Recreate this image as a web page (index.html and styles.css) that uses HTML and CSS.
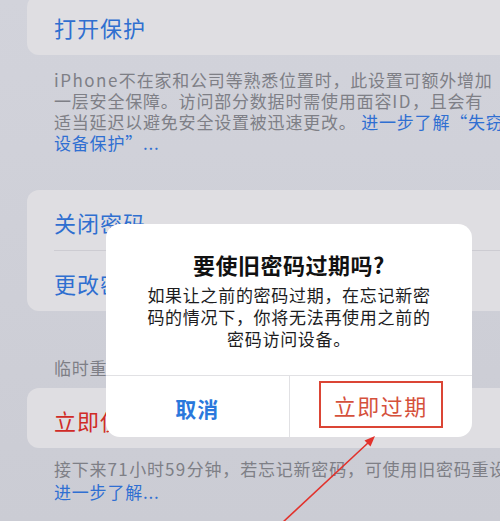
FILE: index.html
```html
<!DOCTYPE html>
<html lang="zh">
<head>
<meta charset="utf-8">
<link rel="stylesheet" href="styles.css">
</head>
<body>
<div class="page">
  <div class="card card-top">
    <div class="row blue">打开保护</div>
  </div>
  <div class="note">
    <div class="line"><span class="latin">iPhone</span>不在家和公司等熟悉位置时，此设置可额外增加</div>
    <div class="line">一层安全保障。访问部分数据时需使用面容<span class="latin">ID</span>，且会有</div>
    <div class="line">适当延迟以避免安全设置被迅速更改。 <span class="link">进一步了解“失窃</span></div>
    <div class="line link">设备保护”...</div>
  </div>
  <div class="card card-mid">
    <div class="row blue">关闭密码</div>
    <div class="sep"></div>
    <div class="row blue">更改密码</div>
  </div>
  <div class="header">临时重设密码</div>
  <div class="card">
    <div class="row red">立即使旧密码过期</div>
  </div>
  <div class="note note-bottom">
    <div class="line">接下来<span class="latin">71</span>小时<span class="latin">59</span>分钟，若忘记新密码，可使用旧密码重设密码。</div>
    <div class="line link">进一步了解...</div>
  </div>
</div>

<div class="alert">
  <div class="alert-body">
    <div class="alert-title">要使旧密码过期吗?</div>
    <div class="alert-msg">如果让之前的密码过期，在忘记新密<br>码的情况下，你将无法再使用之前的<br>密码访问设备。</div>
  </div>
  <div class="alert-actions">
    <div class="action cancel">取消</div>
    <div class="action">
      <span class="destructive">立即过期</span>
    </div>
  </div>
</div>

<svg class="arrow" width="500" height="521" viewBox="0 0 500 521">
  <line x1="282" y1="523" x2="369" y2="442" stroke="#e2322c" stroke-width="1.6"/>
  <polygon points="375,436 364.5,440.5 370.5,446.5" fill="#e2322c"/>
</svg>
</body>
</html>
```

FILE: styles.css
```css
html, body {
  margin: 0;
  padding: 0;
}
body {
  width: 500px;
  height: 521px;
  overflow: hidden;
  position: relative;
  background: linear-gradient(#d2d3db, #cbccd4);
  font-family: "Noto Sans CJK SC", "Noto Sans", sans-serif;
}
.page {
  width: 560px;
  margin-left: 27px;
  margin-top: -5px;
}
.card {
  background: #dfdee2;
  border-radius: 12px;
}
.card-mid {
  margin-top: 37px;
}
.row {
  height: 60px;
  box-sizing: border-box;
  padding: 3px 0 0 27px;
  display: flex;
  align-items: center;
  font-size: 22px;
  letter-spacing: 1px;
  white-space: nowrap;
}
.blue { color: #2f6fd0; }
.red { color: #d02b27; }
.sep {
  height: 1px;
  margin-left: 27px;
  background: #cdccd2;
}
.note {
  padding: 14px 0 0 27px;
  color: #7e7f86;
  font-size: 17px;
  letter-spacing: 0.8px;
  line-height: 21px;
  white-space: nowrap;
}
.line {
  overflow: hidden;
}
.latin {
  letter-spacing: 1.5px;
}
.link { color: #2f6fd2; }
.header {
  padding: 46px 0 0 27px;
  height: 21px;
  line-height: 21px;
  margin-bottom: 10px;
  color: #7e7f86;
  font-size: 17px;
  letter-spacing: 0.8px;
  white-space: nowrap;
}
.note-bottom {
  padding-top: 9px;
  line-height: 23px;
}

.alert {
  position: absolute;
  left: 106px;
  top: 224px;
  width: 366px;
  height: 213px;
  background: #fff;
  border-radius: 14px;
  display: flex;
  flex-direction: column;
  overflow: hidden;
}
.alert-body {
  height: 152px;
  box-sizing: border-box;
  padding-top: 26px;
  text-align: center;
  border-bottom: 1px solid #e1e1e4;
}
.alert-title {
  font-size: 22px;
  font-weight: 700;
  line-height: 28px;
  letter-spacing: 0.5px;
  color: #111;
}
.alert-msg {
  margin-top: 6px;
  font-size: 17px;
  line-height: 22px;
  letter-spacing: 0.7px;
  color: #1c1c1e;
}
.alert-actions {
  flex: 1;
  display: flex;
}
.action {
  flex: 1;
  display: flex;
  align-items: center;
  justify-content: center;
}
.cancel {
  border-right: 1px solid #e1e1e4;
  color: #2a78dc;
  font-size: 21px;
  font-weight: 700;
  letter-spacing: 1px;
  padding-top: 2px;
}
.destructive {
  width: 124px;
  height: 47px;
  box-sizing: border-box;
  border: 2px solid #db4535;
  display: flex;
  align-items: center;
  justify-content: center;
  color: #d5513c;
  font-size: 22px;
  letter-spacing: 1.5px;
  margin-bottom: 4px;
}
.arrow {
  position: absolute;
  left: 0;
  top: 0;
  pointer-events: none;
}
```
